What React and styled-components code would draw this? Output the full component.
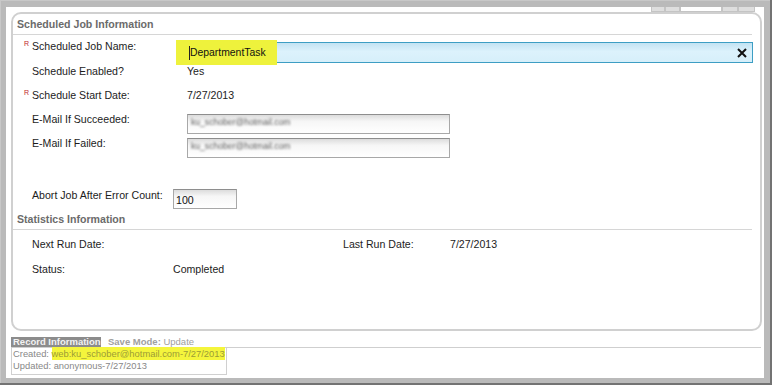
import React from 'react';
import styled, { createGlobalStyle } from 'styled-components';

const GlobalStyle = createGlobalStyle`
    body {
        margin: 0;
        background: #fff;
    }
    * {
        box-sizing: border-box;
    }
`;

const Frame = styled.div`
    width: 772px;
    height: 385px;
    background: #bababa;
    padding: 7px 8px 7px 6px;
    box-shadow: inset -2px -2px 0 #737373, inset 1px 1px 0 #c8c8c8;
    font-family: "Liberation Sans", Arial, sans-serif;
`;

const Sheet = styled.div`
    height: 100%;
    background: #fff;
    padding: 0 2px 0 5px;
    display: flex;
    flex-direction: column;
`;

const TopStrip = styled.div`
    height: 5px;
    display: flex;
    justify-content: flex-end;
    padding-right: 7px;
`;

const StripButton = styled.div`
    width: ${props => props.w}px;
    height: 5px;
    background: ${props => props.light ? '#fff' : '#dedede'};
    border: 1px solid #c4c4c4;
    border-top: none;
`;

const Panel = styled.div`
    height: 319px;
    border: 2px solid #d0d0d0;
    border-radius: 10px;
    display: flex;
    flex-direction: column;
`;

const SectionTitle = styled.div`
    font-size: 10.6px;
    font-weight: bold;
    color: #6b6b6b;
    line-height: 12px;
    padding: ${props => props.top}px 0 4px 4px;
    margin-right: 8px;
    border-bottom: 1px solid #d6d6d6;
`;

const Rows = styled.div`
    margin-top: ${props => props.gap}px;
    display: flex;
    flex-direction: column;
`;

const Row = styled.div`
    display: flex;
    align-items: flex-start;
    height: ${props => props.h}px;
    padding-left: 11px;
`;

const Marker = styled.span`
    width: 8px;
    font-size: 7px;
    line-height: 8px;
    color: #c02828;
`;

const Label = styled.div`
    width: ${props => props.w}px;
    flex: none;
    font-size: 10.6px;
    line-height: 12px;
    color: #1c1c1c;
`;

const Value = styled.div`
    font-size: 10.6px;
    line-height: 12px;
    color: #1c1c1c;
`;

const StatsRow = styled(Row)`
    padding-left: 19px;
`;

const NameInput = styled.div`
    position: relative;
    margin-top: 2px;
    width: 566px;
    height: 21px;
    border: 1px solid #3d9ec4;
    background: linear-gradient(#c3e3f3, #dcf2fc 45%, #d6effa);
    display: flex;
    align-items: center;
    padding-left: 1px;
`;

const Highlight = styled.span`
    position: absolute;
    left: -12px;
    top: -3px;
    width: 101px;
    height: 25px;
    background: #eef23c;
`;

const NameText = styled.span`
    position: relative;
    font-size: 10.4px;
    line-height: 14px;
    color: #111;
    border-left: 1px solid #222;
`;

const ClearIcon = styled.svg`
    position: absolute;
    right: 5px;
    top: 5px;
`;

const TextBox = styled.div`
    margin-top: ${props => props.top}px;
    width: ${props => props.w}px;
    height: 20px;
    border: 1px solid #a8a8a8;
    border-top-color: #8e8e8e;
    background: linear-gradient(#dcdcdc, #f6f6f6 35%, #fff);
    display: flex;
    align-items: ${props => props.bottom ? 'flex-end' : 'center'};
    padding: 0 1px 1px 2px;
    font-size: 10.6px;
    line-height: 13px;
    color: #111;
`;

const Blurred = styled.span`
    display: inline-block;
    font-size: 8.6px;
    color: #5e5e5e;
    filter: blur(0.8px);
    padding-left: 1px;
    margin-top: -2px;
`;

const TabBar = styled.div`
    margin-top: 6px;
    margin-right: 1px;
    display: flex;
    align-items: center;
    border-bottom: 1px solid #cfcfcf;
    font-size: 9.5px;
    line-height: 10px;
    white-space: nowrap;
`;

const Tab = styled.span`
    background: #8c8c8c;
    color: #f2f2f2;
    font-weight: bold;
    padding: 0 2px;
    width: 90px;
    overflow: hidden;
`;

const SaveMode = styled.span`
    margin-left: 7px;
    color: #a0a0a0;
    b {
        font-weight: bold;
    }
`;

const InfoBox = styled.div`
    width: 216px;
    border: 1px solid #d0d0d0;
    border-top: none;
    padding: 0 1px 2px 1px;
    font-size: 9.4px;
    line-height: 12px;
    color: #888;
    white-space: nowrap;
`;

const Marked = styled.span`
    background: #f4f53c;
    color: #9c9c36;
    padding: 1px 0;
`;

const FieldRow = ({ required, label, h, children }) => (
    <Row h={h}>
        <Marker>{required ? 'R' : ''}</Marker>
        <Label w={155}>{label}</Label>
        {children}
    </Row>
);

const App = () => {
    return (
        <>
            <GlobalStyle />
            <Frame>
                <Sheet>
                    <TopStrip>
                        <StripButton w={14} />
                        <StripButton w={15} />
                        <StripButton w={42} light />
                        <StripButton w={16} />
                        <StripButton w={17} />
                    </TopStrip>
                    <Panel>
                        <SectionTitle top={4}>Scheduled Job Information</SectionTitle>
                        <Rows gap={5}>
                            <FieldRow required label="Scheduled Job Name:" h={25}>
                                <NameInput>
                                    <Highlight />
                                    <NameText>DepartmentTask</NameText>
                                    <ClearIcon width="10" height="10" viewBox="0 0 10 10">
                                        <path d="M1 1 L9 9 M9 1 L1 9" stroke="#111" strokeWidth="2" />
                                    </ClearIcon>
                                </NameInput>
                            </FieldRow>
                            <FieldRow label="Schedule Enabled?" h={24}>
                                <Value>Yes</Value>
                            </FieldRow>
                            <FieldRow required label="Schedule Start Date:" h={24}>
                                <Value>7/27/2013</Value>
                            </FieldRow>
                            <FieldRow label="E-Mail If Succeeded:" h={24}>
                                <TextBox w={263} top={1}>
                                    <Blurred>ku_schober@hotmail.com</Blurred>
                                </TextBox>
                            </FieldRow>
                            <FieldRow label="E-Mail If Failed:" h={24}>
                                <TextBox w={263} top={1}>
                                    <Blurred>ku_schober@hotmail.com</Blurred>
                                </TextBox>
                            </FieldRow>
                        </Rows>
                        <Rows gap={28}>
                            <Row h={22}>
                                <Marker />
                                <Label w={141}>Abort Job After Error Count:</Label>
                                <TextBox w={64} top={0} bottom>100</TextBox>
                            </Row>
                        </Rows>
                        <SectionTitle top={2}>Statistics Information</SectionTitle>
                        <Rows gap={8}>
                            <StatsRow h={25}>
                                <Label w={141}>Next Run Date:</Label>
                                <Label w={170} />
                                <Label w={107}>Last Run Date:</Label>
                                <Value>7/27/2013</Value>
                            </StatsRow>
                            <StatsRow h={25}>
                                <Label w={141}>Status:</Label>
                                <Value>Completed</Value>
                            </StatsRow>
                        </Rows>
                    </Panel>
                    <TabBar>
                        <Tab>Record Information</Tab>
                        <SaveMode><b>Save Mode:</b> Update</SaveMode>
                    </TabBar>
                    <InfoBox>
                        <div>Created: <Marked>web:ku_schober@hotmail.com-7/27/2013</Marked></div>
                        <div>Updated: anonymous-7/27/2013</div>
                    </InfoBox>
                </Sheet>
            </Frame>
        </>
    );
};

export default App;
